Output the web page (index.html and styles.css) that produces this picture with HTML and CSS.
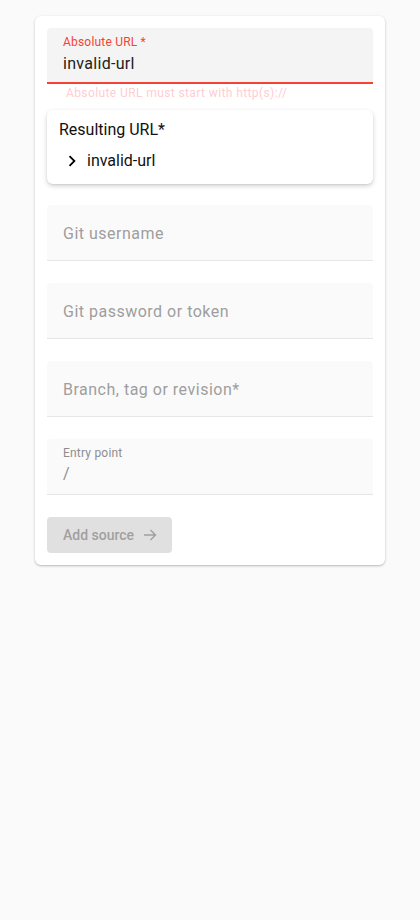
FILE: index.html
```html
<!DOCTYPE html>
<html>
<head>
<meta charset="utf-8">
<link rel="stylesheet" href="styles.css">
</head>
<body>
<div class="card">
  <div class="field field-error">
    <div class="label label-error">Absolute URL *</div>
    <div class="value">invalid-url</div>
  </div>
  <div class="helper">Absolute URL must start with http(s)://</div>
  <div class="result">
    <div class="result-title">Resulting URL*</div>
    <div class="result-row">
      <svg class="chev" width="24" height="24" viewBox="0 0 24 24"><path d="M8.59 16.59 13.17 12 8.59 7.41 10 6l6 6-6 6z" fill="#000"/></svg>
      <span>invalid-url</span>
    </div>
  </div>
  <div class="field field-empty"><div class="placeholder">Git username</div></div>
  <div class="field field-empty"><div class="placeholder">Git password or token</div></div>
  <div class="field field-empty"><div class="placeholder">Branch, tag or revision*</div></div>
  <div class="field field-filled">
    <div class="label">Entry point</div>
    <div class="value value-muted">/</div>
  </div>
  <div class="actions">
    <button class="btn">Add source
      <svg width="16" height="16" viewBox="0 0 16 16"><path d="M2 8h11.5M8.5 3l5 5-5 5" fill="none" stroke="#a0a0a0" stroke-width="1.4"/></svg>
    </button>
  </div>
</div>
</body>
</html>
```
FILE: styles.css
```css
html, body { margin: 0; padding: 0; }
body {
  background: #fafafa;
  font-family: Roboto, "Liberation Sans", sans-serif;
  width: 420px;
  min-height: 920px;
}
.card {
  margin: 16px 35px 0 35px;
  background: #fff;
  border-radius: 6px;
  box-shadow: 0 1px 3px rgba(0,0,0,0.2), 0 1px 1px rgba(0,0,0,0.08);
  padding: 12px 12px 12px 12px;
  display: flex;
  flex-direction: column;
}
.field {
  height: 55px;
  border-radius: 4px 4px 0 0;
  border-bottom: 1px solid #e6e6e6;
  box-sizing: content-box;
  padding: 0 16px;
  display: flex;
  flex-direction: column;
  justify-content: center;
}
.field-error {
  background: #f4f4f4;
  height: 54px;
  border-bottom: 2px solid #f44336;
  justify-content: flex-start;
}
.field-empty { background: #fafafa; margin-top: 21px; }
.field-empty + .field-empty, .field-filled { margin-top: 22px; }
.field-filled { background: #fafafa; justify-content: flex-start; }
.field-empty .placeholder { margin-top: 2px; }
.label {
  font-size: 12px;
  color: #8e8e8e;
  margin-top: 7px;
  line-height: 14px;
  letter-spacing: 0.2px;
}
.label-error { color: #f44336; }
.value {
  font-size: 16px;
  color: #212121;
  margin-top: 5px;
  line-height: 20px;
  letter-spacing: 0.3px;
}
.value-muted { color: #8e8e8e; margin-top: 4px; }
.placeholder {
  font-size: 16px;
  color: #9e9e9e;
  letter-spacing: 0.5px;
}
.helper {
  font-size: 12px;
  color: #ffcdd2;
  margin: 2px 0 0 19px;
  line-height: 14px;
  letter-spacing: 0.4px;
}
.result {
  margin-top: 10px;
  background: #fff;
  border-radius: 6px;
  box-shadow: 0 2px 5px rgba(0,0,0,0.18), 0 1px 2px rgba(0,0,0,0.06);
  padding: 9px 12px 12px 12px;
  height: 53px;
  box-sizing: content-box;
}
.result-title {
  font-size: 16px;
  color: #111;
  line-height: 22px;
}
.result-row {
  display: flex;
  align-items: center;
  margin-top: 9px;
  font-size: 16px;
  color: #111;
  line-height: 20px;
  padding-left: 4px;
}
.chev { margin-left: -2px; margin-right: 4px; width: 22px; height: 22px; }
.actions { margin-top: 22px; }
.btn {
  background: #e0e0e0;
  border: none;
  border-radius: 4px;
  height: 36px;
  padding: 0 14px 0 16px;
  font-family: Roboto, "Liberation Sans", sans-serif;
  font-size: 14px;
  font-weight: 500;
  color: #a0a0a0;
  display: inline-flex;
  align-items: center;
  gap: 8px;
}
```
